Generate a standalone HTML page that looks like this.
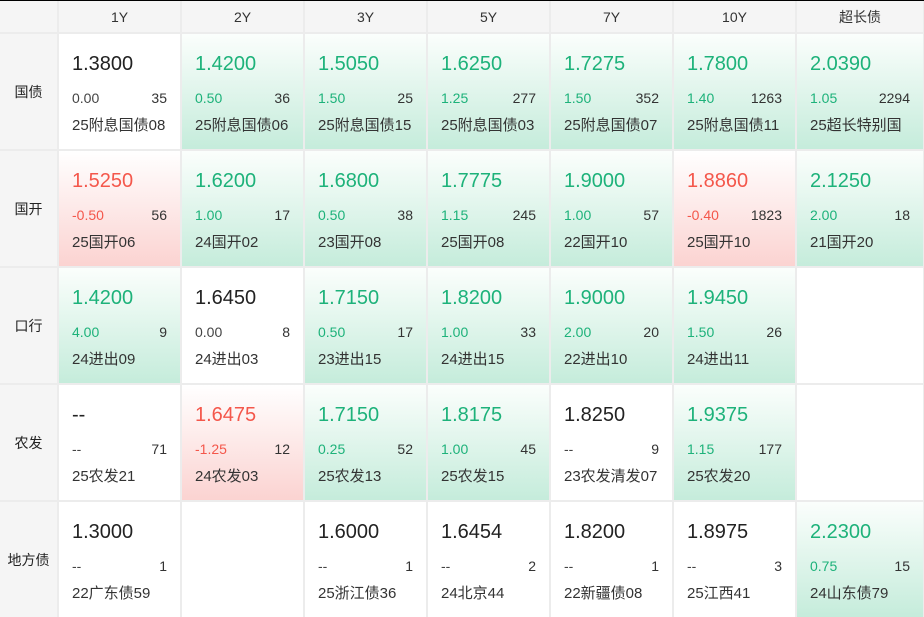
<!DOCTYPE html>
<html><head><meta charset="utf-8"><style>
*{margin:0;padding:0;box-sizing:border-box}
body{width:924px;height:616px;overflow:hidden;background:#ececec;font-family:"Liberation Sans","Noto Sans CJK SC",sans-serif;border-top:1px solid #000}
.g{display:grid;grid-template-columns:57px repeat(6,121px) 126px;grid-template-rows:31px repeat(5,115px);gap:2px;margin-left:0}
.h{background:#f5f5f5;color:#333;font-size:14px;display:flex;align-items:center;justify-content:center}
.rl{background:#f5f5f5;color:#222;font-size:14px;display:flex;align-items:center;justify-content:center}
.c{background:#fff;position:relative;color:#333}
.gr{background:linear-gradient(#fbfefc,#c5ecdb)}
.rd{background:linear-gradient(#fff,#fbd3d1)}
.v{position:absolute;left:13px;top:19px;font-size:20px;color:#222}
.a{position:absolute;left:13px;top:56px;font-size:14px;color:#444}
.b{position:absolute;right:13px;top:56px;font-size:14px;color:#333}
.n{position:absolute;left:13px;top:80px;font-size:15px;color:#333}
.gr .v,.gr .a{color:#1db27a}
.rd .v,.rd .a{color:#f4574b}
</style></head><body><div class="g">
<div class="h"></div><div class="h">1Y</div><div class="h">2Y</div><div class="h">3Y</div><div class="h">5Y</div><div class="h">7Y</div><div class="h">10Y</div><div class="h">超长债</div>

<div class="rl">国债</div>
<div class="c"><span class="v">1.3800</span><span class="a">0.00</span><span class="b">35</span><span class="n">25附息国债08</span></div>
<div class="c gr"><span class="v">1.4200</span><span class="a">0.50</span><span class="b">36</span><span class="n">25附息国债06</span></div>
<div class="c gr"><span class="v">1.5050</span><span class="a">1.50</span><span class="b">25</span><span class="n">25附息国债15</span></div>
<div class="c gr"><span class="v">1.6250</span><span class="a">1.25</span><span class="b">277</span><span class="n">25附息国债03</span></div>
<div class="c gr"><span class="v">1.7275</span><span class="a">1.50</span><span class="b">352</span><span class="n">25附息国债07</span></div>
<div class="c gr"><span class="v">1.7800</span><span class="a">1.40</span><span class="b">1263</span><span class="n">25附息国债11</span></div>
<div class="c gr"><span class="v">2.0390</span><span class="a">1.05</span><span class="b">2294</span><span class="n">25超长特别国</span></div>

<div class="rl">国开</div>
<div class="c rd"><span class="v">1.5250</span><span class="a">-0.50</span><span class="b">56</span><span class="n">25国开06</span></div>
<div class="c gr"><span class="v">1.6200</span><span class="a">1.00</span><span class="b">17</span><span class="n">24国开02</span></div>
<div class="c gr"><span class="v">1.6800</span><span class="a">0.50</span><span class="b">38</span><span class="n">23国开08</span></div>
<div class="c gr"><span class="v">1.7775</span><span class="a">1.15</span><span class="b">245</span><span class="n">25国开08</span></div>
<div class="c gr"><span class="v">1.9000</span><span class="a">1.00</span><span class="b">57</span><span class="n">22国开10</span></div>
<div class="c rd"><span class="v">1.8860</span><span class="a">-0.40</span><span class="b">1823</span><span class="n">25国开10</span></div>
<div class="c gr"><span class="v">2.1250</span><span class="a">2.00</span><span class="b">18</span><span class="n">21国开20</span></div>

<div class="rl">口行</div>
<div class="c gr"><span class="v">1.4200</span><span class="a">4.00</span><span class="b">9</span><span class="n">24进出09</span></div>
<div class="c"><span class="v">1.6450</span><span class="a">0.00</span><span class="b">8</span><span class="n">24进出03</span></div>
<div class="c gr"><span class="v">1.7150</span><span class="a">0.50</span><span class="b">17</span><span class="n">23进出15</span></div>
<div class="c gr"><span class="v">1.8200</span><span class="a">1.00</span><span class="b">33</span><span class="n">24进出15</span></div>
<div class="c gr"><span class="v">1.9000</span><span class="a">2.00</span><span class="b">20</span><span class="n">22进出10</span></div>
<div class="c gr"><span class="v">1.9450</span><span class="a">1.50</span><span class="b">26</span><span class="n">24进出11</span></div>
<div class="c"></div>

<div class="rl">农发</div>
<div class="c"><span class="v">--</span><span class="a">--</span><span class="b">71</span><span class="n">25农发21</span></div>
<div class="c rd"><span class="v">1.6475</span><span class="a">-1.25</span><span class="b">12</span><span class="n">24农发03</span></div>
<div class="c gr"><span class="v">1.7150</span><span class="a">0.25</span><span class="b">52</span><span class="n">25农发13</span></div>
<div class="c gr"><span class="v">1.8175</span><span class="a">1.00</span><span class="b">45</span><span class="n">25农发15</span></div>
<div class="c"><span class="v">1.8250</span><span class="a">--</span><span class="b">9</span><span class="n">23农发清发07</span></div>
<div class="c gr"><span class="v">1.9375</span><span class="a">1.15</span><span class="b">177</span><span class="n">25农发20</span></div>
<div class="c"></div>

<div class="rl">地方债</div>
<div class="c"><span class="v">1.3000</span><span class="a">--</span><span class="b">1</span><span class="n">22广东债59</span></div>
<div class="c"></div>
<div class="c"><span class="v">1.6000</span><span class="a">--</span><span class="b">1</span><span class="n">25浙江债36</span></div>
<div class="c"><span class="v">1.6454</span><span class="a">--</span><span class="b">2</span><span class="n">24北京44</span></div>
<div class="c"><span class="v">1.8200</span><span class="a">--</span><span class="b">1</span><span class="n">22新疆债08</span></div>
<div class="c"><span class="v">1.8975</span><span class="a">--</span><span class="b">3</span><span class="n">25江西41</span></div>
<div class="c gr"><span class="v">2.2300</span><span class="a">0.75</span><span class="b">15</span><span class="n">24山东债79</span></div>
</div></body></html>
